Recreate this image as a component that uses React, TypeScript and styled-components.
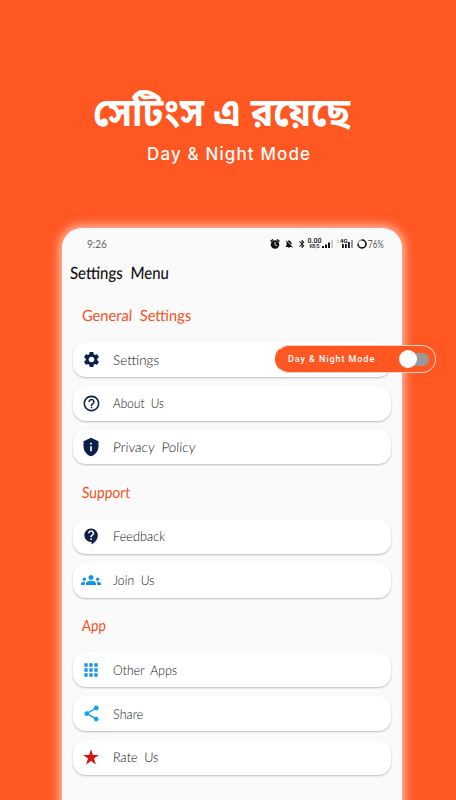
import React, { useLayoutEffect, useRef, useState } from "react";
import styled, { createGlobalStyle } from "styled-components";
import {
  MdSettings, MdHelpOutline, MdPrivacyTip, MdContactSupport, MdGroups,
  MdApps, MdShare, MdNotificationsOff, MdBluetooth,
} from "react-icons/md";

const GlobalStyle = createGlobalStyle`
  * { box-sizing: border-box; }
  body { margin: 0; background: #ff5722; }
`;

const Poster = styled.main`
  width: 456px;
  height: 800px;
  overflow: hidden;
  background: #ff5722;
  display: flex;
  flex-direction: column;
  font-family: "Lato", sans-serif;
`;

const Hero = styled.header`
  height: 228px;
  width: 100%;
  flex: none;
  display: flex;
  flex-direction: column;
  color: #fff;
  padding-top: 89px;
`;

const Title = styled.h1`
  margin: 0 0 0 93px;
  height: 54px;
  font: 700 39px/54px "Noto Sans Bengali", "Noto Sans", sans-serif;
  white-space: nowrap;
`;

const Subtitle = styled.p`
  margin: 1px 0 0 147px;
  height: 20px;
  font: 500 17px/20px "Inter", sans-serif;
  white-space: nowrap;
`;

const Phone = styled.section`
  width: 340px;
  height: 610px;
  flex: none;
  margin-left: 62px;
  background: #fafafa;
  border-radius: 20px;
  box-shadow: 0 0 11px 2px rgba(255, 255, 255, 0.7);
`;

const StatusBar = styled.div`
  height: 31px;
  padding: 0 18px 0 25px;
  display: flex;
  align-items: center;
  color: #666;
  font-size: 11px;
  font-weight: 400;
`;

const StatusIcons = styled.div`
  margin-left: auto;
  display: flex;
  align-items: center;
  color: #111;
`;

const Gap = styled.span<{ $w: number }>`
  width: ${(p) => p.$w}px;
`;

const Rate = styled.span`
  width: 15px;
  display: flex;
  flex-direction: column;
  align-items: center;
  gap: 1px;
  font: 500 7px/6px "Roboto", sans-serif;
  small { font-size: 4.5px; line-height: 4px; }
`;

const Battery = styled.span`
  color: #555;
  width: 16px;
  margin-left: 1px;
  white-space: nowrap;
`;

const ScreenTitle = styled.h2`
  margin: 0 0 0 8px;
  height: 28px;
  font-size: 17px;
  line-height: 27px;
  font-weight: 500;
  color: #111;
`;

const Group = styled.section<{ $head: number }>`
  h3 {
    margin: 0 0 0 20px;
    height: ${(p) => p.$head}px;
    padding-bottom: 17px;
    display: flex;
    align-items: flex-end;
    font-size: 15.5px;
    line-height: 20px;
    font-weight: 400;
    color: #f4511e;
  }
`;

const Cards = styled.div`
  display: flex;
  flex-direction: column;
  gap: 8.7px;
  padding: 0 11px;
`;

const Card = styled.div`
  position: relative;
  height: 35px;
  border-radius: 13px;
  background: #fff;
  box-shadow: 0 1px 2px rgba(0, 0, 0, 0.25);
  display: flex;
  align-items: center;
  padding-left: 8px;
  font-size: 13.5px;
  line-height: 18px;
  font-weight: 300;
  color: #111;
`;

const IconSlot = styled.span<{ $color: string }>`
  width: 20px;
  height: 20px;
  margin-right: 12px;
  display: flex;
  align-items: center;
  justify-content: center;
  color: ${(p) => p.$color};
`;

const Callout = styled.div`
  position: absolute;
  left: 202px;
  top: 3px;
  width: 161px;
  height: 28px;
  border-radius: 14px;
  border: 1px solid #ffd0bf;
  border-left-color: #ff5722;
  background: #ff5722;
  display: flex;
  align-items: center;
  justify-content: space-between;
  padding: 0 5px 0 12px;
  z-index: 1;
  color: #fff;
  font: 500 9px/12px "Roboto", sans-serif;
`;

const Toggle = styled.span`
  width: 31px;
  height: 18px;
  display: flex;
  align-items: center;
  &::before {
    content: "";
    width: 18px;
    height: 18px;
    border-radius: 50%;
    background: #fff;
    flex: none;
    z-index: 1;
  }
  &::after {
    content: "";
    width: 21px;
    height: 13px;
    margin-left: -9px;
    border-radius: 7px;
    background: #999;
    flex: none;
  }
`;

const Run = styled.span<{ $hand?: boolean }>`
  display: inline-block;
  white-space: pre;
  transform-origin: 0 50%;
  word-spacing: ${(p) => (p.$hand ? "0.25em" : "normal")};
`;

type FitMode = "space" | "scale" | "hand";

/* Stretches or tightens a line so that it fills the given width. */
function Fit({ text, width, mode = "space" }: { text: string; width: number; mode?: FitMode }) {
  const ref = useRef<HTMLSpanElement>(null);
  const [natural, setNatural] = useState(0);
  useLayoutEffect(() => {
    if (ref.current) setNatural(ref.current.offsetWidth);
  }, []);
  let style: React.CSSProperties | undefined;
  if (natural && mode === "space") {
    style = { letterSpacing: `${(width - natural) / (text.length - 1)}px` };
  } else if (natural) {
    style = { transform: `scaleX(${width / natural})${mode === "hand" ? " skewX(-3deg)" : ""}` };
  }
  return <Run ref={ref} $hand={mode === "hand"} style={style}>{text}</Run>;
}

const AlarmIcon = () => (
  <svg width="10" height="10" viewBox="0 0 20 20">
    <path d="M1 5l5-4M19 5l-5-4" stroke="#111" strokeWidth="3" />
    <circle cx="10" cy="11" r="8.5" fill="#111" />
    <path d="M10 6v5.5l4 2" stroke="#fff" strokeWidth="1.8" fill="none" />
  </svg>
);

const Signal = ({ tag }: { tag?: boolean }) => (
  <svg width={tag ? 17 : 12} height="11" viewBox={tag ? "-5 0 17 11" : "0 0 12 11"}>
    {tag
      ? <path d="M0 6h1.8v4H0zM3 6h1.8v4H3zM6 4h1.8v6H6z" fill="#111" />
      : <path d="M0 8h2v2H0zM3 6.5h2V10H3zM6 4.5h2V10H6z" fill="#111" />}
    <path d="M9 2h2v8H9z" fill={tag ? "#999" : "#ccc"} />
    {tag && <path d="M-5 2.5h2M-5 4.5h2" stroke="#aaa" strokeWidth=".7" />}
    {tag && <text x="-2" y="5" fontSize="6" fontFamily="Roboto" fontWeight="700" fill="#111">4G</text>}
  </svg>
);

const BatteryRing = () => (
  <svg width="10" height="10" viewBox="0 0 10 10">
    <circle cx="5" cy="5" r="4" fill="none" stroke="#999" strokeWidth="1.4" />
    <path d="M5 1A4 4 0 1 1 1 5" fill="none" stroke="#111" strokeWidth="1.5" />
  </svg>
);

const Star = () => (
  <svg width="16" height="16" viewBox="0 0 16 16">
    <path d="M8 .3l1.9 5.7h6L11 9.500l1.900 6L8 11.900l-4.900 3.600L5 9.500.1 6h6z" fill="#d91414" />
  </svg>
);

type Item = { label: string; width: number; color: string; icon: React.ReactNode; callout?: boolean };

const NAVY = "#0b2149";

const groups: { title: string; width: number; head: number; items: Item[] }[] = [
  {
    title: "General Settings", width: 109, head: 55,
    items: [
      { label: "Settings", width: 46, color: NAVY, icon: <MdSettings size={19} />, callout: true },
      { label: "About Us", width: 51, color: NAVY, icon: <MdHelpOutline size={19} /> },
      { label: "Privacy Policy", width: 83, color: NAVY, icon: <MdPrivacyTip size={20} /> },
    ],
  },
  {
    title: "Support", width: 48, head: 54.5,
    items: [
      { label: "Feedback", width: 52, color: NAVY, icon: <MdContactSupport size={19} /> },
      { label: "Join Us", width: 42, color: "#1593e6", icon: <MdGroups size={20} /> },
    ],
  },
  {
    title: "App", width: 24, head: 54.8,
    items: [
      { label: "Other Apps", width: 64, color: "#1593e6", icon: <MdApps size={20} /> },
      { label: "Share", width: 30, color: "#08a4f5", icon: <MdShare size={19} /> },
      { label: "Rate Us", width: 45, color: "#d91414", icon: <Star /> },
    ],
  },
];

export default function App() {
  return (
    <>
      <GlobalStyle />
      <Poster>
        <Hero>
          <Title><Fit text="সেটিংস এ রয়েছে" width={257} mode="scale" /></Title>
          <Subtitle><Fit text="Day & Night Mode" width={163} /></Subtitle>
        </Hero>
        <Phone>
          <StatusBar>
            <Fit text="9:26" width={20} mode="scale" />
            <StatusIcons>
              <AlarmIcon />
              <Gap $w={4} />
              <MdNotificationsOff size={10} />
              <Gap $w={3} />
              <MdBluetooth size={10} />
              <Rate>0.00<small>KB/S</small></Rate>
              <Signal />
              <Gap $w={3} />
              <Signal tag />
              <Gap $w={3} />
              <BatteryRing />
              <Battery><Fit text="76%" width={16} mode="scale" /></Battery>
            </StatusIcons>
          </StatusBar>
          <ScreenTitle><Fit text="Settings Menu" width={99} mode="hand" /></ScreenTitle>
          {groups.map((g) => (
            <Group key={g.title} $head={g.head}>
              <h3><Fit text={g.title} width={g.width} mode="hand" /></h3>
              <Cards>
                {g.items.map((it) => (
                  <Card key={it.label}>
                    <IconSlot $color={it.color}>{it.icon}</IconSlot>
                    <Fit text={it.label} width={it.width} mode="hand" />
                    {it.callout && (
                      <Callout>
                        <Fit text="Day & Night Mode" width={86} />
                        <Toggle />
                      </Callout>
                    )}
                  </Card>
                ))}
              </Cards>
            </Group>
          ))}
        </Phone>
      </Poster>
    </>
  );
}
